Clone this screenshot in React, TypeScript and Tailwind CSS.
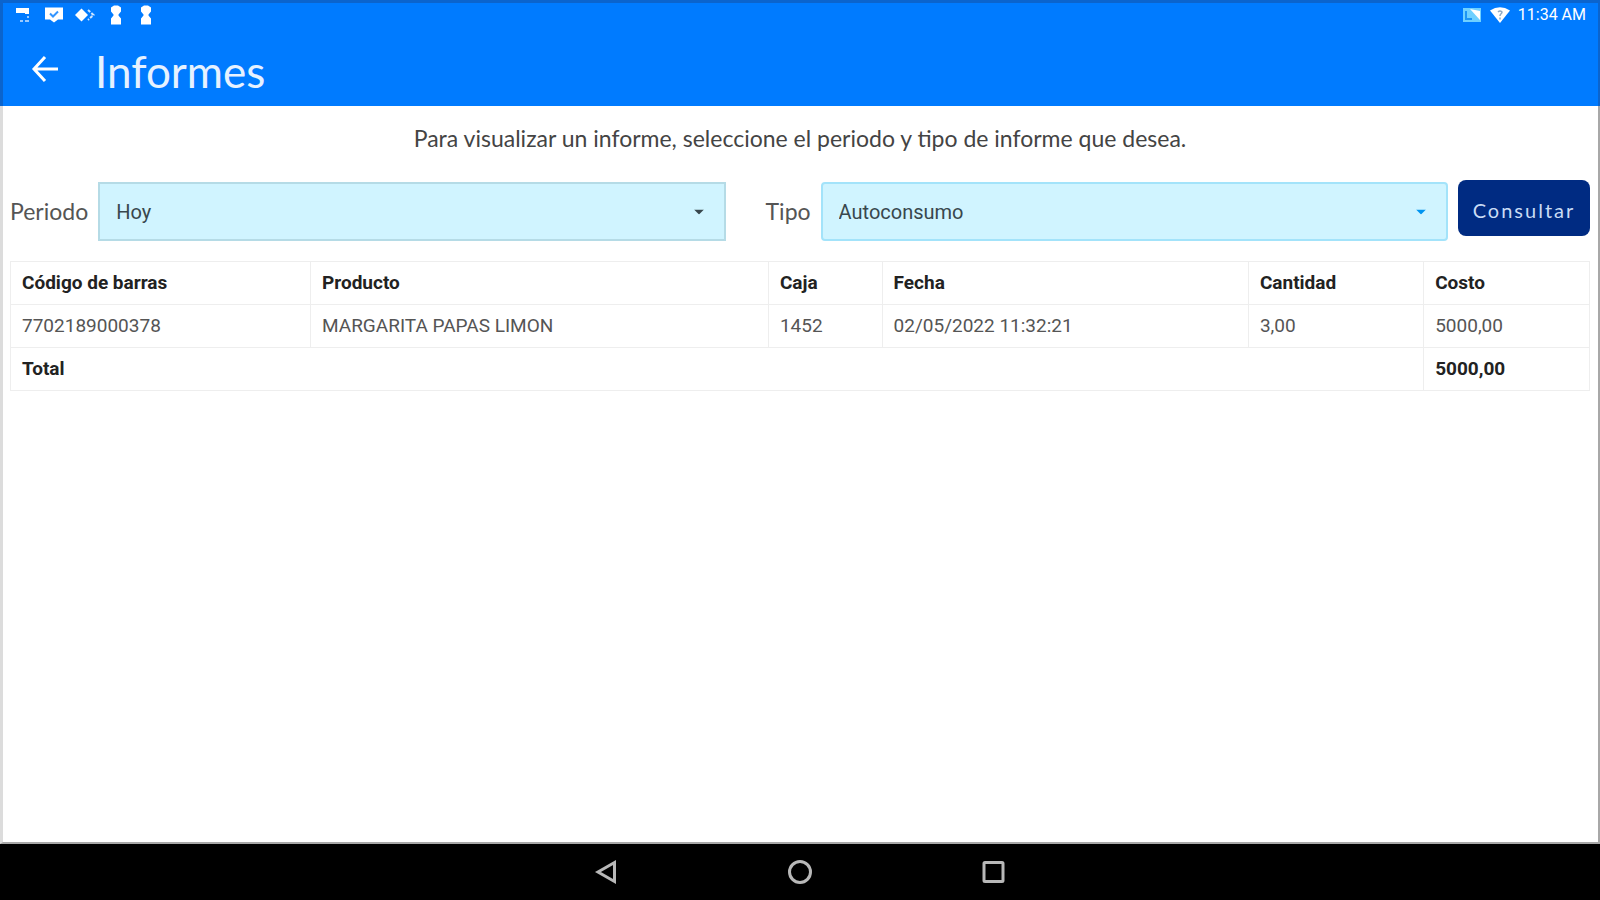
import { useState } from "react";

const rows = [
  {
    codigo: "7702189000378",
    producto: "MARGARITA PAPAS LIMON",
    caja: "1452",
    fecha: "02/05/2022 11:32:21",
    cantidad: "3,00",
    costo: "5000,00",
  },
];

const PawnIcon = () => (
  <svg viewBox="0 0 18 20" className="h-5 w-[18px]" fill="currentColor">
    <path d="M7 0.500h4l3 2v4l-2.500 3v1l2.500 3v6H4v-6l2.500-3v-1L4 6.500v-4z" />
  </svg>
);

const StatusBar = () => (
  <div className="flex h-6 items-center justify-between pr-3 pl-3 text-white">
    <div className="flex items-center gap-3">
      <svg viewBox="0 0 18 20" className="h-5 w-[18px]" fill="currentColor">
        <path d="M1 3h13v6h-4V8H1z" />
        <path d="M5 15h3v2H5zM12 11h2v2h-2zM10 15h4v2h-4z" opacity="0.6" />
      </svg>
      <svg viewBox="0 0 18 20" className="h-5 w-[18px]" fill="none">
        <path d="M0 2.500h18v12h-5l-4 3-4-3H0z" fill="currentColor" />
        <path d="M5 8.500l3 3 5-5" stroke="#007bff" strokeWidth="2" opacity="0.8" />
      </svg>
      <svg viewBox="0 0 20 20" className="h-5 w-5" fill="none">
        <path d="M6.500 3.500L13 10l-6.500 6.500L0 10z" fill="currentColor" />
        <path d="M13 5l5.500 5-5.500 5" stroke="currentColor" strokeWidth="2" strokeDasharray="3 1.500" opacity="0.8" />
      </svg>
      <PawnIcon />
      <PawnIcon />
    </div>
    <div className="flex items-center gap-2">
      <svg viewBox="0 0 20 16" className="h-4 w-5" fill="none">
        <path d="M1 1h18v14H1z" fill="#6fd0ff" />
        <path d="M4 4v8h6" stroke="#1c95f5" strokeWidth="2" />
        <path d="M8 2l10 2v9z" fill="white" />
      </svg>
      <svg viewBox="0 0 20 16" className="h-4 w-5" fill="none">
        <path d="M0 3.500Q10-3 20 3.500L10 16z" fill="white" />
        <path d="M8 5q2-2 4 0c0 2-2 1.500-2 4M10 10.500v2" stroke="#8fa9c4" strokeWidth="1.500" />
      </svg>
      <span className="text-base">11:34 AM</span>
    </div>
  </div>
);

const Header = () => (
  <header className="h-[106px] border-t-[3px] border-r-2 border-l-[3px] border-[#0b64cd] bg-[#007bff] text-white">
    <StatusBar />
    <div className="flex h-[79px] items-center pt-1 pl-7">
      <button type="button" aria-label="Volver" className="mr-9">
        <svg viewBox="0 0 28 28" className="h-7 w-7" fill="none" stroke="currentColor" strokeWidth="3">
          <path d="M27 14H3M14 2L3 14l11 12" />
        </svg>
      </button>
      <h1 className="pt-1 font-['Lato',sans-serif] text-[44px] leading-none text-[#e6f2ff]">Informes</h1>
    </div>
  </header>
);

type SelectFieldProps = {
  id: string;
  label: string;
  options: string[];
  labelClass?: string;
  selectClass: string;
  caretClass: string;
};

const SelectField = ({ id, label, options, labelClass = "", selectClass, caretClass }: SelectFieldProps) => {
  const [value, setValue] = useState(options[0]);

  return (
    <>
      <label htmlFor={id} className={`font-['Lato',sans-serif] text-[23px] text-[#555555] ${labelClass}`}>
        {label}
      </label>
      <div className="relative">
        <select
          id={id}
          value={value}
          onChange={(e) => setValue(e.target.value)}
          className={`h-[59px] w-full appearance-none border-2 bg-[#d0f4ff] px-4 text-xl text-[#38474d] ${selectClass}`}
        >
          {options.map((option) => (
            <option key={option}>{option}</option>
          ))}
        </select>
        <svg
          viewBox="0 0 10 5"
          className={`pointer-events-none absolute top-1/2 right-[22px] h-[5px] w-[10px] -translate-y-1/2 ${caretClass}`}
          fill="currentColor"
        >
          <path d="M0 0h10L5 5z" />
        </svg>
      </div>
    </>
  );
};

const ReportTable = () => (
  <table className="mt-5 w-full table-fixed border-collapse text-left text-[19px] leading-6 text-[#555555] [&_td]:border [&_td]:border-[#eeeeee] [&_td]:px-[11px] [&_td]:py-[9px] [&_th]:border [&_th]:border-[#eeeeee] [&_th]:px-[11px] [&_th]:py-[9px] [&_th]:text-[#222222]">
    <colgroup>
      <col className="w-[19%]" />
      <col className="w-[29%]" />
      <col className="w-[7.200%]" />
      <col className="w-[23.200%]" />
      <col className="w-[11.100%]" />
      <col />
    </colgroup>
    <thead>
      <tr>
        <th>Código de barras</th>
        <th>Producto</th>
        <th>Caja</th>
        <th>Fecha</th>
        <th>Cantidad</th>
        <th>Costo</th>
      </tr>
    </thead>
    <tbody>
      {rows.map((row) => (
        <tr key={row.codigo}>
          <td>{row.codigo}</td>
          <td>{row.producto}</td>
          <td>{row.caja}</td>
          <td>{row.fecha}</td>
          <td>{row.cantidad}</td>
          <td>{row.costo}</td>
        </tr>
      ))}
    </tbody>
    <tfoot>
      <tr>
        <th colSpan={5}>Total</th>
        <th>5000,00</th>
      </tr>
    </tfoot>
  </table>
);

const NavigationBar = () => (
  <nav className="flex h-14 items-center justify-center gap-[169px] bg-black text-[#b8b8b8]">
    <button type="button" aria-label="Atrás">
      <svg viewBox="0 0 24 26" className="h-[26px] w-6" fill="none" stroke="currentColor" strokeWidth="3">
        <path d="M20.500 3.500v19L4 13z" />
      </svg>
    </button>
    <button type="button" aria-label="Inicio">
      <svg viewBox="0 0 26 26" className="h-[26px] w-[26px]" fill="none" stroke="currentColor" strokeWidth="3">
        <circle cx="13" cy="13" r="10.500" />
      </svg>
    </button>
    <button type="button" aria-label="Recientes">
      <svg viewBox="0 0 24 26" className="h-[26px] w-6" fill="none" stroke="currentColor" strokeWidth="3">
        <rect x="2" y="3.500" width="19" height="19" rx="1" />
      </svg>
    </button>
  </nav>
);

const App = () => {
  return (
    <div className="flex min-h-screen flex-col bg-white font-['Roboto',sans-serif]">
      <Header />
      <main className="flex-1 border-r-2 border-b-2 border-l-[3px] border-[#a8a8a8] border-l-[#dcdcdc] pr-2 pl-[7px]">
        <p className="pt-4 text-center font-['Lato',sans-serif] text-[23px] leading-8 text-[#444444]">
          Para visualizar un informe, seleccione el periodo y tipo de informe que desea.
        </p>
        <div className="mt-[26px] flex items-start gap-[10px]">
          <div className="grid flex-1 grid-cols-[auto_1fr_auto_1fr] items-center gap-x-[10px] pt-[2px]">
            <SelectField
              id="periodo"
              label="Periodo"
              options={["Hoy", "Ayer", "Semana"]}
              selectClass="border-[#b5dbe6]"
              caretClass="text-[#38474d]"
            />
            <SelectField
              id="tipo"
              label="Tipo"
              options={["Autoconsumo", "Ventas"]}
              labelClass="pl-[30px]"
              selectClass="rounded border-[#a3e3fa]"
              caretClass="text-[#0094f0]"
            />
          </div>
          <button
            type="button"
            className="h-14 w-[132px] rounded-lg bg-[#002b82] pt-1 font-['Lato',sans-serif] text-xl tracking-widest text-[#c9dcf5]"
          >
            Consultar
          </button>
        </div>
        <ReportTable />
      </main>
      <NavigationBar />
    </div>
  );
};

export default App;
